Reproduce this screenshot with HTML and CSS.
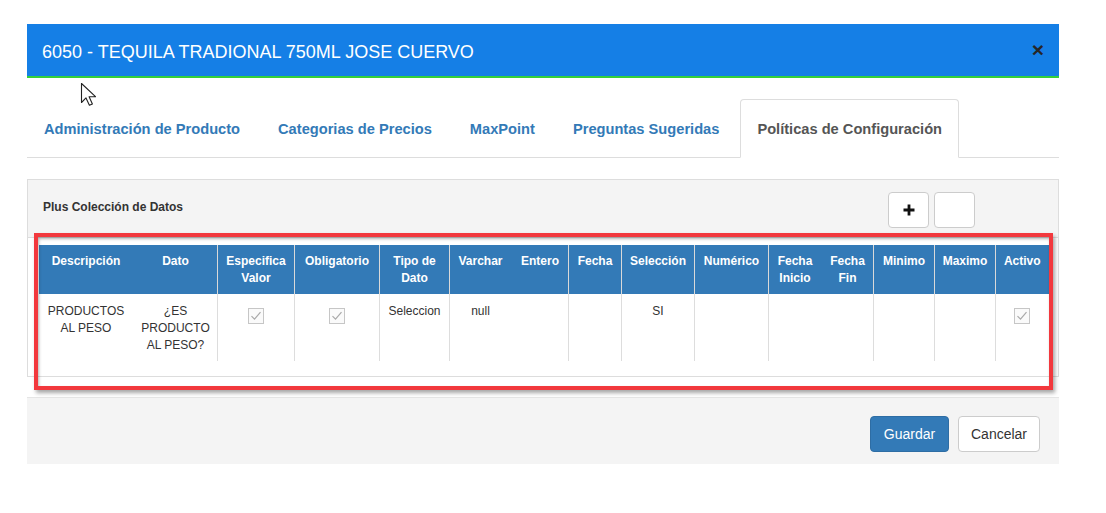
FILE: index.html
```html
<!DOCTYPE html>
<html lang="es">
<head>
<meta charset="utf-8">
<title>6050 - TEQUILA TRADIONAL 750ML JOSE CUERVO</title>
<link rel="stylesheet" href="styles.css">
</head>
<body>
<div class="modal">
  <div class="modal-header">
    <h4 class="modal-title">6050 - TEQUILA TRADIONAL 750ML JOSE CUERVO</h4>
    <span class="close">&times;</span>
  </div>
  <div class="modal-body">
    <ul class="tabs">
      <li class="tab">Administración de Producto</li>
      <li class="tab">Categorias de Precios</li>
      <li class="tab">MaxPoint</li>
      <li class="tab">Preguntas Sugeridas</li>
      <li class="tab active">Políticas de Configuración</li>
    </ul>
    <div class="panel">
      <div class="panel-heading">
        <span class="panel-title">Plus Colección de Datos</span>
        <div class="tools">
          <button class="btn-tool"><svg width="14" height="14" viewBox="0 0 14 14"><path d="M7 1.5v11M1.5 7h11" stroke="#111" stroke-width="2.8"/></svg></button>
          <button class="btn-tool"></button>
        </div>
      </div>
      <div class="panel-body">
        <table class="grid">
          <colgroup>
            <col style="width:95px"><col style="width:84px"><col style="width:77px"><col style="width:85px"><col style="width:70px"><col style="width:62px"><col style="width:57px"><col style="width:53px"><col style="width:73px"><col style="width:74px"><col style="width:53px"><col style="width:52px"><col style="width:61px"><col style="width:61px"><col style="width:53px">
          </colgroup>
          <thead>
            <tr>
              <th>Descripción</th>
              <th class="nb">Dato</th>
              <th>Especifica Valor</th>
              <th>Obligatorio</th>
              <th>Tipo de Dato</th>
              <th>Varchar</th>
              <th class="nb">Entero</th>
              <th>Fecha</th>
              <th>Selección</th>
              <th>Numérico</th>
              <th>Fecha Inicio</th>
              <th class="nb">Fecha Fin</th>
              <th>Minimo</th>
              <th>Maximo</th>
              <th>Activo</th>
            </tr>
          </thead>
          <tbody>
            <tr>
              <td>PRODUCTOS AL PESO</td>
              <td class="nb">¿ES PRODUCTO AL PESO?</td>
              <td><span class="chk"><svg width="16" height="16" viewBox="0 0 16 16"><rect x="0.5" y="0.5" width="15" height="15" fill="#fafafa" stroke="#c6c6c6"/><path d="M3.5 8.2l3 3 6-7" fill="none" stroke="#a9a9a9" stroke-width="1.2"/></svg></span></td>
              <td><span class="chk"><svg width="16" height="16" viewBox="0 0 16 16"><rect x="0.5" y="0.5" width="15" height="15" fill="#fafafa" stroke="#c6c6c6"/><path d="M3.5 8.2l3 3 6-7" fill="none" stroke="#a9a9a9" stroke-width="1.2"/></svg></span></td>
              <td>Seleccion</td>
              <td>null</td>
              <td class="nb"></td>
              <td></td>
              <td>SI</td>
              <td></td>
              <td></td>
              <td class="nb"></td>
              <td></td>
              <td></td>
              <td><span class="chk"><svg width="16" height="16" viewBox="0 0 16 16"><rect x="0.5" y="0.5" width="15" height="15" fill="#fafafa" stroke="#c6c6c6"/><path d="M3.5 8.2l3 3 6-7" fill="none" stroke="#a9a9a9" stroke-width="1.2"/></svg></span></td>
            </tr>
          </tbody>
        </table>
      </div>
    </div>
  </div>
  <div class="modal-footer">
    <button class="btn btn-primary">Guardar</button>
    <button class="btn btn-default">Cancelar</button>
  </div>
</div>
<div class="highlight"></div>
<svg class="cursor" width="18" height="25" viewBox="0 0 18 25"><path d="M1.5 1.5v19l4.5-4.6 3.4 7.4 3-1.4-3.3-7.2h6.4z" fill="#fff" stroke="#222" stroke-width="1.1" stroke-linejoin="round"/></svg>
</body>
</html>
```

FILE: styles.css
```css
* { box-sizing: border-box; }
html, body { margin: 0; padding: 0; background: #fff; }
body {
  font-family: "Liberation Sans", Arial, sans-serif;
  color: #333;
  position: relative;
  width: 1106px;
  height: 513px;
  overflow: hidden;
}
.modal {
  width: 1032px;
  margin: 24px 0 0 27px;
  background: #fff;
}
.modal-header {
  height: 54px;
  background: #157fe6;
  border-bottom: 2px solid #35d03a;
  display: flex;
  align-items: center;
  justify-content: space-between;
  padding: 3px 15px 0 15px;
}
.modal-title {
  margin: 0;
  font-size: 18px;
  font-weight: normal;
  color: #fff;
  line-height: 20px;
}
.close {
  font-size: 21px;
  font-weight: bold;
  color: #262626;
  line-height: 20px;
  margin-top: -3px;
}
.modal-body {
  padding: 21px 0 20px 0;
}
.tabs {
  list-style: none;
  margin: 0;
  padding: 0;
  display: flex;
  border-bottom: 1px solid #ddd;
}
.tab {
  font-size: 14.65px;
  font-weight: bold;
  color: #337ab7;
  line-height: 20px;
  padding: 19px 16px 18px;
  margin-right: 4px;
  margin-bottom: -1px;
  border: 1px solid transparent;
  border-radius: 4px 4px 0 0;
  white-space: nowrap;
}
.tab.active {
  color: #555;
  background: #fff;
  border-color: #ddd;
  border-bottom-color: transparent;
}
.panel {
  margin-top: 21px;
  border: 1px solid #ddd;
}
.panel-heading {
  background: #f4f4f4;
  border-bottom: 1px solid #ddd;
  display: flex;
  align-items: center;
  justify-content: space-between;
  padding: 12px 83px 9px 15px;
}
.panel-title {
  font-size: 12px;
  font-weight: bold;
  color: #333;
  margin-top: -6px;
}
.tools {
  display: flex;
  gap: 5px;
}
.btn-tool {
  width: 41px;
  height: 36px;
  background: #fff;
  border: 1px solid #ccc;
  border-radius: 4px;
  padding: 0;
  display: flex;
  align-items: center;
  justify-content: center;
}
.panel-body {
  background: #fff;
  padding: 7px 9px 15px 10px;
}
.grid {
  width: 1010px;
  table-layout: fixed;
  border-collapse: collapse;
  font-size: 12px;
}
.grid th {
  background: #337ab7;
  color: #fff;
  font-weight: bold;
  line-height: 17px;
  padding: 8px 4px 7px;
  text-align: center;
  vertical-align: top;
  border-left: 1px solid #d9d9d9;
}
.grid td {
  line-height: 17px;
  padding: 9px 4px 7px;
  height: 67px;
  text-align: center;
  vertical-align: top;
  color: #333;
  border-left: 1px solid #ddd;
}
.grid th:first-child, .grid td:first-child,
.grid th.nb, .grid td.nb { border-left-color: transparent; }
.grid th.nb { border-left-color: #337ab7; }
.chk {
  display: block;
  width: 16px;
  height: 16px;
  margin: 5px auto 0;
}
.chk svg { display: block; }
.modal-footer {
  background: #f4f4f4;
  border-top: 1px solid #e5e5e5;
  padding: 18px 19px 12px;
  display: flex;
  justify-content: flex-end;
  gap: 9px;
}
.btn {
  font-family: "Liberation Sans", Arial, sans-serif;
  font-size: 14px;
  line-height: 20px;
  height: 36px;
  padding: 7px 12px;
  border-radius: 4px;
  border: 1px solid;
}
.btn-primary {
  background: #337ab7;
  border-color: #2e6da4;
  color: #fff;
  width: 79px;
}
.btn-default {
  background: #fff;
  border-color: #ccc;
  color: #333;
  width: 82px;
}
.highlight {
  position: absolute;
  left: 34px;
  top: 233px;
  width: 1019px;
  height: 157px;
  border: 4px solid #f2383d;
  box-shadow: 2px 3px 4px rgba(0,0,0,0.35), inset 1px 2px 3px rgba(0,0,0,0.3);
  pointer-events: none;
}
.cursor {
  position: absolute;
  left: 80px;
  top: 82px;
}
```
